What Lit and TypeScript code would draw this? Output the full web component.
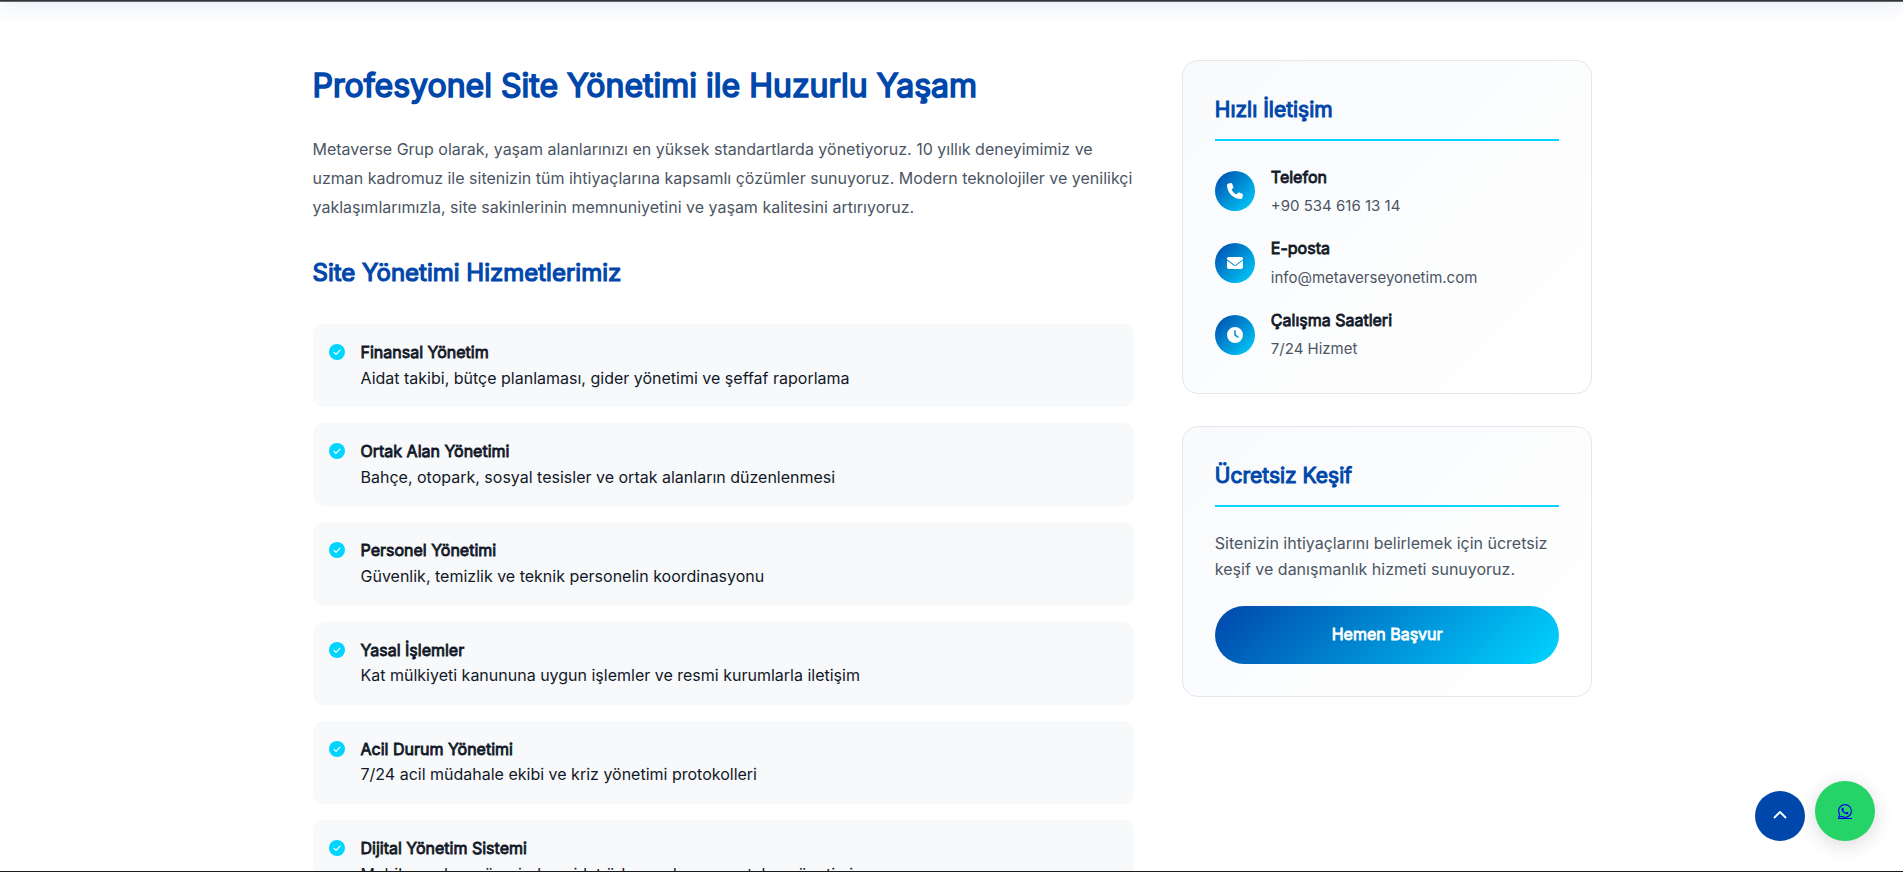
import { LitElement, html, css, svg } from "lit";
import { customElement } from "lit/decorators.js";

const icon = (body: unknown, size = 16, cls = "glyph") =>
  html`<svg class=${cls} viewBox="0 0 ${size} ${size}" fill="currentColor" aria-hidden="true">${body}</svg>`;

const phone = svg`<path d="M164.9 24.6c-7.7-18.6-28-28.5-47.4-23.2l-88 24C12.1 30.2 0 46 0 64C0 311.4 200.6 512 448 512c18 0 33.8-12.1 38.6-29.5l24-88c5.3-19.4-4.6-39.7-23.2-47.4l-96-40c-16.3-6.8-35.2-2.1-46.3 11.6L304.7 368C234.3 334.7 177.3 277.7 144 207.3L193.3 167c13.7-11.2 18.4-30 11.6-46.3l-40-96z"/>`;
const envelope = svg`<path d="M48 64C21.5 64 0 85.5 0 112c0 15.1 7.1 29.3 19.2 38.4L236.8 313.6c11.4 8.5 27 8.5 38.4 0L492.8 150.4c12.1-9.1 19.2-23.3 19.2-38.4c0-26.5-21.5-48-48-48H48zM0 176V384c0 35.3 28.7 64 64 64H448c35.3 0 64-28.7 64-64V176L294.4 339.2c-22.8 17.1-54 17.1-76.8 0L0 176z"/>`;
const clock = svg`<path fill-rule="evenodd" d="M256 0a256 256 0 1 1 0 512A256 256 0 1 1 256 0zM232 120V256c0 8 4 15.500 10.700 20l96 64c11 7.400 25.900 4.400 33.300-6.700s4.400-25.900-6.700-33.300L280 243.200V120c0-13.300-10.700-24-24-24s-24 10.700-24 24z"/>`;
const check = svg`<circle cx="8" cy="8" r="8"/><path d="M5 8.300l2 2 4-4.100" fill="none" stroke="#fff" stroke-width="1.2" stroke-linecap="round" stroke-linejoin="round"/>`;
const chevronUp = svg`<path fill="none" stroke="currentColor" stroke-width="1.800" stroke-linecap="round" stroke-linejoin="round" d="M2.500 9.500 8 4l5.500 5.500"/>`;
const whatsapp = svg`<path d="M13.601 2.326A7.85 7.85 0 0 0 7.994 0C3.627 0 .068 3.558.064 7.926c0 1.399.366 2.76 1.057 3.965L0 16l4.204-1.102a7.9 7.9 0 0 0 3.79.965h.004c4.368 0 7.926-3.558 7.93-7.93A7.9 7.9 0 0 0 13.6 2.326zM7.994 14.521a6.6 6.6 0 0 1-3.356-.92l-.24-.144-2.494.654.666-2.433-.156-.251a6.56 6.56 0 0 1-1.007-3.505c0-3.626 2.957-6.584 6.591-6.584a6.56 6.56 0 0 1 4.66 1.931 6.56 6.56 0 0 1 1.928 4.66c-.004 3.639-2.961 6.592-6.592 6.592m3.615-4.934c-.197-.099-1.17-.578-1.353-.646-.182-.065-.315-.099-.445.099-.133.197-.513.646-.627.775-.114.133-.232.148-.43.05-.197-.1-.836-.308-1.592-.985-.59-.525-.985-1.175-1.103-1.372-.114-.198-.011-.304.088-.403.087-.088.197-.232.296-.346.1-.114.133-.198.198-.33.065-.134.034-.248-.015-.347-.05-.099-.445-1.076-.612-1.47-.16-.389-.323-.335-.445-.34-.114-.007-.247-.007-.38-.007a.73.73 0 0 0-.529.247c-.182.198-.691.677-.691 1.654s.71 1.916.81 2.049c.098.133 1.394 2.132 3.383 2.992.47.205.84.326 1.129.418.475.152.904.129 1.246.08.38-.058 1.171-.48 1.338-.943.164-.464.164-.86.114-.943-.049-.084-.182-.133-.38-.232"/>`;

const services = [
  { title: "Finansal Yönetim", text: "Aidat takibi, bütçe planlaması, gider yönetimi ve şeffaf raporlama" },
  { title: "Ortak Alan Yönetimi", text: "Bahçe, otopark, sosyal tesisler ve ortak alanların düzenlenmesi" },
  { title: "Personel Yönetimi", text: "Güvenlik, temizlik ve teknik personelin koordinasyonu" },
  { title: "Yasal İşlemler", text: "Kat mülkiyeti kanununa uygun işlemler ve resmi kurumlarla iletişim" },
  { title: "Acil Durum Yönetimi", text: "7/24 acil müdahale ekibi ve kriz yönetimi protokolleri" },
  { title: "Dijital Yönetim Sistemi", text: "Mobil uygulama üzerinden aidat ödeme, duyuru ve talep yönetimi" },
];

const contacts = [
  { glyph: phone, title: "Telefon", text: "+90 534 616 13 14" },
  { glyph: envelope, title: "E-posta", text: "info@metaverseyonetim.com" },
  { glyph: clock, title: "Çalışma Saatleri", text: "7/24 Hizmet" },
];

@customElement("app-root")
export class AppRoot extends LitElement {
  static styles = css`
    :host {
      --primary: #0047ab;
      --accent: #00d4ff;
      --ink: #111827;
      --muted: #4b5563;
      --gradient: linear-gradient(135deg, var(--primary), var(--accent));
      display: block;
      position: relative;
      height: 100vh;
      overflow: hidden;
      background: #fff;
      color: var(--ink);
      font: 400 16px/1.6 Inter, "Liberation Sans", sans-serif;
    }
    *, *::before, *::after { box-sizing: border-box; }
    h1, h2, h3, h4, p, ul { margin: 0; padding: 0; }
    .topbar {
      height: 72px;
      margin-top: -70px;
      background: #333;
      border-bottom: 1px solid #666;
      box-shadow: 0 4px 20px rgba(0, 71, 171, 0.1);
    }
    .edge {
      position: absolute;
      inset: auto 0 0;
      height: 1px;
      background: #1a1a1a;
    }
    .page { padding: 58px 0 0 2px; }
    .container {
      display: grid;
      grid-template-columns: 2fr 1fr;
      gap: 48px;
      align-items: start;
      max-width: 1280px;
      margin: 0 auto;
    }
    h1, h2, h3 { color: var(--primary); }
    h1, h2, h3, h4, .cta { font-weight: 400; -webkit-text-stroke: 0.05em; }
    h1 { font-size: 32px; margin-bottom: 24px; }
    h2 { font-size: 24px; margin: 32px 0; }
    .lead { color: var(--muted); line-height: 1.8; }
    .services { list-style: none; display: grid; gap: 16px; }
    .service {
      display: flex;
      gap: 16px;
      padding: 16px;
      border-radius: 10px;
      background: #f8f9fb;
    }
    .tick { flex: none; width: 16px; height: 16px; margin-top: 4px; color: var(--accent); }
    .service h4, .contact h4 { font-size: 16px; }
    .sidebar { display: grid; gap: 32px; }
    .card {
      padding: 32px;
      border: 1px solid #e5e7eb;
      border-radius: 16px;
      background: linear-gradient(135deg, #f8fafc, #fff);
    }
    .card h3 {
      font-size: 21px;
      padding-bottom: 12px;
      margin-bottom: 24px;
      border-bottom: 2px solid var(--accent);
    }
    .contacts { list-style: none; display: grid; gap: 18px; }
    .contact { display: flex; align-items: center; gap: 16px; }
    .contact h4 { margin-bottom: 4px; }
    .contact p { font-size: 15px; color: var(--muted); }
    .badge {
      flex: none;
      display: grid;
      place-items: center;
      width: 40px;
      height: 40px;
      border-radius: 50%;
      background: var(--gradient);
      color: #fff;
    }
    .glyph { display: block; width: 16px; height: 16px; }
    .note { color: var(--muted); margin-bottom: 24px; }
    .cta {
      display: block;
      padding: 16px;
      border-radius: 32px;
      background: var(--gradient);
      color: #fff;
      text-align: center;
      text-decoration: none;
    }
    .floating {
      position: absolute;
      right: 28px;
      bottom: 31px;
      display: flex;
      align-items: flex-end;
      gap: 10px;
    }
    .round { display: grid; place-items: center; border: 0; padding: 0; border-radius: 50%; }
    .up { width: 50px; height: 50px; background: var(--primary); color: #fff; }
    .wa {
      width: 60px;
      height: 60px;
      background: #25d366;
      color: #0000ee;
      box-shadow: 0 4px 20px rgba(0, 0, 0, 0.15);
    }
    .wa .mark { display: block; border-bottom: 1px solid; }
    .wa .mark .glyph { width: 14px; height: 14px; }
  `;

  render() {
    return html`
      <div class="topbar"></div>
      <main class="page">
        <div class="container">
          <article>
            <h1>Profesyonel Site Yönetimi ile Huzurlu Yaşam</h1>
            <p class="lead">Metaverse Grup olarak, yaşam alanlarınızı en yüksek standartlarda yönetiyoruz. 10 yıllık deneyimimiz ve uzman kadromuz ile sitenizin tüm ihtiyaçlarına kapsamlı çözümler sunuyoruz. Modern teknolojiler ve yenilikçi yaklaşımlarımızla, site sakinlerinin memnuniyetini ve yaşam kalitesini artırıyoruz.</p>
            <h2>Site Yönetimi Hizmetlerimiz</h2>
            <ul class="services">
              ${services.map((s) => html`
                <li class="service">
                  ${icon(check, 16, "tick")}
                  <div><h4>${s.title}</h4><p>${s.text}</p></div>
                </li>`)}
            </ul>
          </article>
          <aside class="sidebar">
            <section class="card">
              <h3>Hızlı İletişim</h3>
              <ul class="contacts">
                ${contacts.map((c) => html`
                  <li class="contact">
                    <span class="badge">${icon(c.glyph, 512)}</span>
                    <div><h4>${c.title}</h4><p>${c.text}</p></div>
                  </li>`)}
              </ul>
            </section>
            <section class="card">
              <h3>Ücretsiz Keşif</h3>
              <p class="note">Sitenizin ihtiyaçlarını belirlemek için ücretsiz keşif ve danışmanlık hizmeti sunuyoruz.</p>
              <a class="cta" href="#basvuru">Hemen Başvur</a>
            </section>
          </aside>
        </div>
      </main>
      <div class="floating">
        <button class="round up" type="button" aria-label="Yukarı çık">${icon(chevronUp)}</button>
        <a class="round wa" href="#whatsapp" aria-label="WhatsApp"><span class="mark">${icon(whatsapp)}</span></a>
      </div>
      <div class="edge"></div>
    `;
  }
}
